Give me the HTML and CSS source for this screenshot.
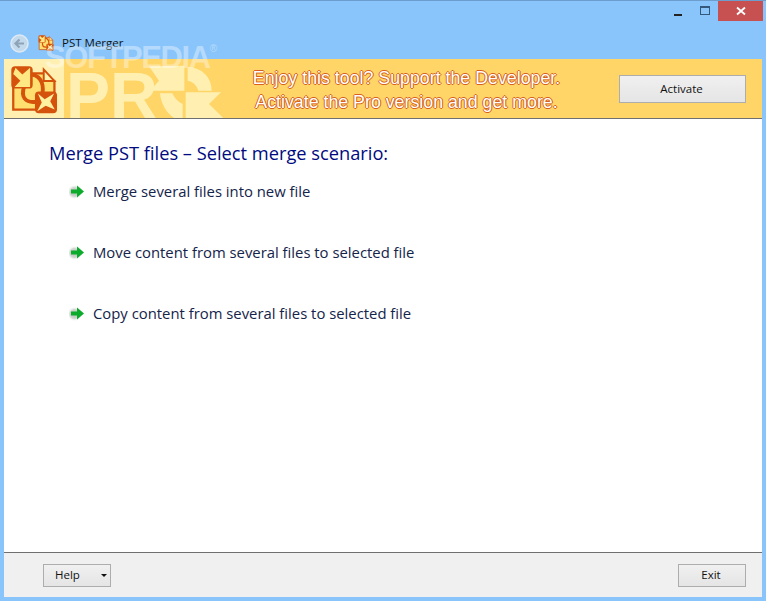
FILE: index.html
```html
<!DOCTYPE html>
<html lang="en">
<head>
<meta charset="utf-8">
<title>PST Merger</title>
<link rel="stylesheet" href="styles.css">
</head>
<body>
<svg class="defs" width="0" height="0">
  <defs>
    <radialGradient id="halo"><stop offset="0" stop-color="#b4bab4"/><stop offset=".6" stop-color="#d2d6d2"/><stop offset="1" stop-color="#fff" stop-opacity="0"/></radialGradient>
    <symbol id="merge-logo" viewBox="28 13 148 150">
      <path d="M38 38H132L165 62V150H38Z" fill="#ffdf70" stroke="#d4520b" stroke-width="7"/>
      <path d="M132 26V62H165Z" fill="#fff3b0" stroke="#d4520b" stroke-width="6"/>
      <path d="M96 42C128 48 134 80 126 108M72 78C60 112 76 130 108 126" fill="none" stroke="#d4520b" stroke-width="12"/>
      <rect x="32" y="16" width="66" height="69" rx="12" fill="#d4520b"/>
      <path d="M45 21 66 42 90 21V80H42L60 61 38 40Z" fill="#ffe784"/>
      <rect x="105" y="94" width="68" height="67" rx="12" fill="#d4520b"/>
      <path d="M114 100 135 118 164 100 152 124 166 150 138 138 112 155 126 128Z" fill="#fff0a0"/>
    </symbol>
    <symbol id="go-arrow" viewBox="0 0 16 16">
      <circle cx="5.500" cy="9" r="7.500" fill="url(#halo)"/>
      <path d="M2 6.500H8V2.500L15 8.500 8 14.500V10.500H2Z" fill="#0cab2c"/>
    </symbol>
  </defs>
</svg>
<div class="window">
  <header class="titlebar">
    <div class="controls">
      <span class="ctl ctl-min"><span class="min-glyph"></span></span>
      <span class="ctl ctl-max"><span class="max-glyph"></span></span>
      <span class="ctl ctl-close">
        <svg width="10" height="10" viewBox="0 0 10 10"><path d="M1 1.500 9 8.500M9 1.500 1 8.500" stroke="#fff" stroke-width="1.800" fill="none"/></svg>
      </span>
    </div>
    <div class="nav">
      <span class="back">
        <svg width="19" height="19" viewBox="0 0 19 19"><circle cx="9.500" cy="9.500" r="8.500" fill="#c3d9ec" stroke="#dfe9f2" stroke-width="1.500"/><path d="M14 9.500H6M9.500 5.500 5.500 9.500 9.500 13.500" stroke="#8ea3b6" stroke-width="2.200" fill="none"/></svg>
      </span>
      <svg class="app-icon" width="16" height="16"><use href="#merge-logo"/></svg>
      <span class="app-name">PST Merger</span>
    </div>
  </header>
  <section class="banner">
    <svg class="logo" width="48" height="49"><use href="#merge-logo"/></svg>
    <span class="pro-text" aria-hidden="true">PR</span>
    <svg class="o-art" width="85" height="60" viewBox="0 0 255 180" aria-hidden="true">
      <path d="M12 22 42 65 15 95H118V20Z" fill="#fff0b1"/>
      <path d="M128 25C170 25 200 55 200 95H160C156 80 145 68 128 65Z" fill="#fff0b1"/>
      <path d="M45 103H82C90 120 100 130 113 135V180H92C65 165 48 135 45 103Z" fill="#fff0b1"/>
      <path d="M122 100H228L192 135 238 180H122Z" fill="#fff0b1"/>
    </svg>
    <div class="promo">
      <p>Enjoy this tool? Support the Developer.</p>
      <p>Activate the Pro version and get more.</p>
    </div>
    <button class="btn btn-activate">Activate</button>
  </section>
  <main class="content">
    <h1 class="heading">Merge PST files – Select merge scenario:</h1>
    <ul class="options">
      <li class="option"><svg class="arrow" width="16" height="16"><use href="#go-arrow"/></svg>Merge several files into new file</li>
      <li class="option"><svg class="arrow" width="16" height="16"><use href="#go-arrow"/></svg>Move content from several files to selected file</li>
      <li class="option"><svg class="arrow" width="16" height="16"><use href="#go-arrow"/></svg>Copy content from several files to selected file</li>
    </ul>
  </main>
  <footer class="footer">
    <button class="btn btn-help">Help<span class="caret"></span></button>
    <button class="btn btn-exit">Exit</button>
  </footer>
  <div class="watermark">SOFTPEDIA<sup>®</sup></div>
</div>
</body>
</html>
```
FILE: styles.css
```css
* { box-sizing: border-box; }
html, body { margin: 0; height: 100%; }
body { overflow: hidden; background: #89c5fb; }
.defs { position: absolute; }
.window {
  position: relative;
  width: 766px; height: 601px;
  display: flex; flex-direction: column;
  background: #89c5fb;
  border-top: 1px solid #6c9dcc;
  padding: 0 4px 4px;
  font-family: "Open Sans", "Noto Sans", sans-serif;
  overflow: hidden;
}
.titlebar { height: 58px; flex: none; position: relative; }
.controls { display: flex; justify-content: flex-end; height: 20px; margin-right: -1px; }
.ctl { display: flex; align-items: center; justify-content: center; height: 20px; }
.ctl-min { width: 26px; padding-right: 2px; }
.ctl-max { width: 26px; }
.ctl-close { width: 45px; background: #c75050; }
.min-glyph { width: 8px; height: 2px; background: #222; margin-top: 7px; }
.max-glyph { width: 10px; height: 9px; border: 1px solid #33587c; border-top-width: 2px; margin-top: -2px; }
.nav { display: flex; align-items: center; height: 22px; margin-top: 11px; padding-left: 6px; }
.back { width: 19px; height: 19px; display: block; line-height: 0; }
.app-icon { margin-left: 9px; }
.app-name { margin-left: 8px; margin-top: -2px; font-size: 11.500px; color: #111; }
.banner {
  position: relative;
  height: 60px; flex: none;
  display: flex; align-items: center;
  border-bottom: 1px solid #6f6f6f;
  overflow: hidden;
  background: linear-gradient(90deg, #fff0b1 0 60px, #fed566 60px);
}
.logo { position: absolute; left: 6px; top: 6px; }
.pro-text {
  position: absolute; left: 62px; top: 4px;
  font: bold 66px/66px "Liberation Sans", sans-serif;
  color: #fff0b1;
}
.o-art { position: absolute; left: 141px; top: 0; }
.promo {
  position: absolute; left: 230px; width: 345px; top: 7px; text-align: center;
  font: 17.800px/24px "Liberation Sans", sans-serif;
  color: #fff;
  text-shadow: 1px 0 0 #d8601c, -1px 0 0 #d8601c, 0 1px 0 #d8601c, 0 -1px 0 #d8601c;
}
.promo p { margin: 0; }
.btn {
  font-family: "Open Sans", sans-serif;
  font-size: 11.500px; color: #111;
  height: 23px; padding: 0 2px 2px 0;
  border: 1px solid #adadad;
  background: linear-gradient(#f0f0f0, #e5e5e5);
}
.btn-activate { position: absolute; left: 615px; top: 16px; width: 127px; height: 28px; }
.content { flex: 1; background: #fff; padding: 21px 45px 0; }
.heading { margin: 0; font-size: 18.250px; line-height: 25px; font-weight: 400; color: #000a80; }
.options { list-style: none; margin: 14px 0 0; padding: 0 0 0 20px; display: flex; flex-direction: column; gap: 37px; }
.option { display: flex; align-items: center; height: 24px; font-size: 14.850px; color: #14244a; }
.arrow { margin-right: 8px; flex: none; }
.footer {
  height: 45px; flex: none;
  background: #f0f0f0;
  border-top: 1px solid #6f6f6f;
  display: flex; justify-content: space-between; align-items: flex-start;
  padding: 11px 16px 0 39px;
}
.btn-help { position: relative; width: 68px; text-align: left; padding-left: 11px; }
.btn-exit { width: 68px; }
.caret { position: absolute; right: 3px; top: 9px; width: 0; height: 0; border: 3px solid transparent; border-top: 3px solid #111; border-bottom: 0; }
.watermark {
  position: absolute; left: 45px; top: 40px;
  font: bold 31px/34px "Liberation Sans", sans-serif;
  letter-spacing: -1.400px;
  color: rgba(255,255,255,.38);
  pointer-events: none;
}
.watermark sup { font-size: 10px; vertical-align: 16px; line-height: 0; font-weight: 400; }
```
